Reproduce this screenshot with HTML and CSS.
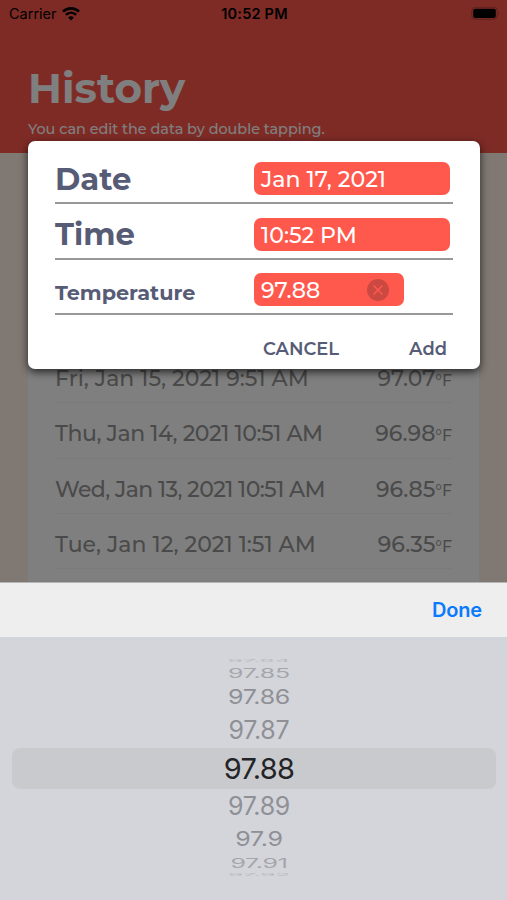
FILE: index.html
```html
<!DOCTYPE html>
<html lang="en">
<head>
    <meta charset="utf-8">
    <title>History</title>
    <link rel="stylesheet" href="styles.css">
</head>

<body>
<div class="screen">
    <header class="header">
        <h1>History</h1>
        <p>You can edit the data by double tapping.</p>
    </header>
    <main class="list">
        <div class="row"><span class="when">Fri, Jan 15, 2021 9:51 AM</span><span class="temp">97.07</span><span class="unit">°F</span></div>
        <div class="row"><span class="when long">Thu, Jan 14, 2021 10:51 AM</span><span class="temp">96.98</span><span class="unit">°F</span></div>
        <div class="row"><span class="when longest">Wed, Jan 13, 2021 10:51 AM</span><span class="temp">96.85</span><span class="unit">°F</span></div>
        <div class="row"><span class="when">Tue, Jan 12, 2021 1:51 AM</span><span class="temp">96.35</span><span class="unit">°F</span></div>
    </main>
</div>

<div class="scrim"></div>

<div class="status">
    <div class="carrier">
        <span>Carrier</span>
        <svg width="18" height="14" viewBox="0 0 18 14">
            <path d="M1 4.6C5.5 0.3 12.5 0.3 17 4.6" fill="none" stroke="#000" stroke-width="2.6"/>
            <path d="M3.9 7.9C6.9 5 11.1 5 14.1 7.9" fill="none" stroke="#000" stroke-width="2.5"/>
            <path d="M9 13.4L6.1 10.4C7.8 8.8 10.2 8.8 11.9 10.4Z"/>
        </svg>
    </div>
    <span class="clock">10:52 PM</span>
    <svg class="battery" width="29" height="14" viewBox="0 0 29 14">
        <rect x="0.8" y="0.3" width="25.4" height="12" rx="3.4" fill="none" stroke="#000" stroke-opacity="0.25"/>
        <rect x="2.2" y="1.7" width="22.6" height="9.2" rx="2"/>
        <path d="M27.3 4.5Q29 6.3 27.3 8.3Z" fill-opacity="0.25"/>
    </svg>
</div>

<div class="dialog">
    <div class="line">
        <label>Date</label>
        <div class="field"><span>Jan 17, 2021</span></div>
    </div>
    <div class="line">
        <label>Time</label>
        <div class="field"><span>10:52 PM</span></div>
    </div>
    <div class="line">
        <label class="temperature">Temperature</label>
        <div class="field short">
            <span>97.88</span>
            <svg width="22" height="22" viewBox="0 0 22 22">
                <circle cx="11" cy="11" r="11" fill="#cc4942"/>
                <path d="M6.5 6.5L15.5 15.5M15.5 6.5L6.5 15.5" stroke="#ff5a4f" stroke-width="1.4"/>
            </svg>
        </div>
    </div>
    <div class="actions">
        <span>CANCEL</span>
        <span>Add</span>
    </div>
</div>

<div class="keyboard">
    <div class="toolbar"><span>Done</span></div>
    <div class="wheel">
        <div class="item far"><span>97.84</span></div>
        <div class="item third"><span>97.85</span></div>
        <div class="item second"><span>97.86</span></div>
        <div class="item first"><span>97.87</span></div>
        <div class="item selected"><span>97.88</span></div>
        <div class="item first"><span>97.89</span></div>
        <div class="item second"><span>97.9</span></div>
        <div class="item third"><span>97.91</span></div>
        <div class="item far"><span>97.92</span></div>
    </div>
</div>
</body>
</html>
```

FILE: styles.css
```css
* {
    box-sizing: border-box;
}

body {
    margin: 0;
    height: 900px;
    overflow: hidden;
    position: relative;
    font-family: Montserrat, Inter, sans-serif;
    font-weight: 500;
}

.screen {
    height: 900px;
    background: #fef0e6;
}

.header {
    height: 153px;
    padding: 62px 28px 0;
    background: #fd574d;
    color: #fff;
}

.header h1 {
    margin: 0;
    font-size: 42px;
    line-height: 52px;
}

.header p {
    margin: 5px 0 0;
    font-size: 14.4px;
    line-height: 20px;
    white-space: nowrap;
}

.list {
    height: 660px;
    margin: 28px 28px 0;
    padding: 167px 27px 0;
    border-radius: 8px;
    background: #fff;
}

.row {
    display: flex;
    align-items: center;
    height: 55.3px;
    padding-top: 7px;
    border-bottom: 1px solid #f8f4f0;
    color: #959595;
    font-size: 22px;
    white-space: nowrap;
}

.when {
    flex: 1;
    letter-spacing: 0.03px;
}

.long {
    letter-spacing: -0.43px;
}

.longest {
    letter-spacing: -0.6px;
}

.unit {
    margin-top: 3px;
    font-size: 15.8px;
}

.scrim {
    position: absolute;
    inset: 0;
    background: rgba(0, 0, 0, 0.5);
}

.status {
    position: absolute;
    top: 0;
    left: 0;
    display: grid;
    grid-template-columns: 1fr auto 1fr;
    align-items: center;
    width: 507px;
    height: 27px;
    padding: 0 7px 0 9px;
    font-family: Inter, sans-serif;
    font-size: 14.5px;
    font-weight: 400;
}

.carrier {
    display: flex;
    align-items: center;
    gap: 5px;
}

.clock {
    font-weight: 600;
    letter-spacing: 0.2px;
}

.battery {
    justify-self: end;
}

.dialog {
    position: absolute;
    top: 141px;
    left: 28px;
    width: 452px;
    height: 228px;
    padding: 8px 27px 0;
    border-radius: 7px;
    background: #fff;
    box-shadow: 0 3px 9px rgba(0, 0, 0, 0.7);
    color: #575c76;
}

.line {
    display: flex;
    align-items: center;
    height: 55.4px;
    padding-top: 2px;
    border-bottom: 2px solid #989898;
}

.line label {
    width: 199px;
    padding-top: 4px;
    font-size: 30.7px;
    font-weight: 700;
}

.line label.temperature {
    padding-top: 11px;
    font-size: 20.8px;
}

.field {
    display: flex;
    align-items: center;
    justify-content: space-between;
    width: 196px;
    height: 33px;
    margin-top: 4px;
    padding: 2px 15px 0 7px;
    border-radius: 7px;
    background: #ff584c;
    color: #fff;
    font-size: 22.1px;
    white-space: nowrap;
}

.short {
    width: 150px;
}

.actions {
    display: flex;
    justify-content: space-between;
    padding: 23px 6px 0 208px;
    font-size: 17.9px;
    font-weight: 600;
    line-height: 22px;
}

.keyboard {
    position: absolute;
    top: 582px;
    left: 0;
    width: 507px;
    height: 318px;
    background: linear-gradient(#d1d5da, #d4d5db 45%);
    font-family: Inter, sans-serif;
    font-weight: 400;
}

.toolbar {
    display: flex;
    align-items: center;
    justify-content: flex-end;
    height: 54.5px;
    padding-right: 25px;
    border-top: 1px solid #b5b5b5;
    background: #eee;
    color: #0a7aff;
    font-size: 20px;
    font-weight: 600;
    letter-spacing: -0.2px;
}

.wheel {
    display: flex;
    flex-direction: column;
    padding: 21.5px 11px 0 12px;
}

.item {
    display: flex;
    align-items: center;
    justify-content: center;
    padding-left: 10px;
    color: #8f9095;
    font-size: 25px;
    letter-spacing: -0.3px;
    line-height: 30px;
}

.selected {
    height: 41px;
    padding-top: 1px;
    border-radius: 8px;
    background: #c9cace;
    color: #242426;
    font-size: 29px;
    letter-spacing: -0.7px;
}

.first {
    height: 35.5px;
}

.second {
    height: 30px;
}

.second span {
    transform: scaleY(0.8);
}

.third {
    height: 18px;
    color: #a5a6ab;
}

.third span {
    transform: scaleY(0.5);
}

.far {
    height: 6px;
    color: #b9babf;
}

.far span {
    transform: scaleY(0.14);
}
```
